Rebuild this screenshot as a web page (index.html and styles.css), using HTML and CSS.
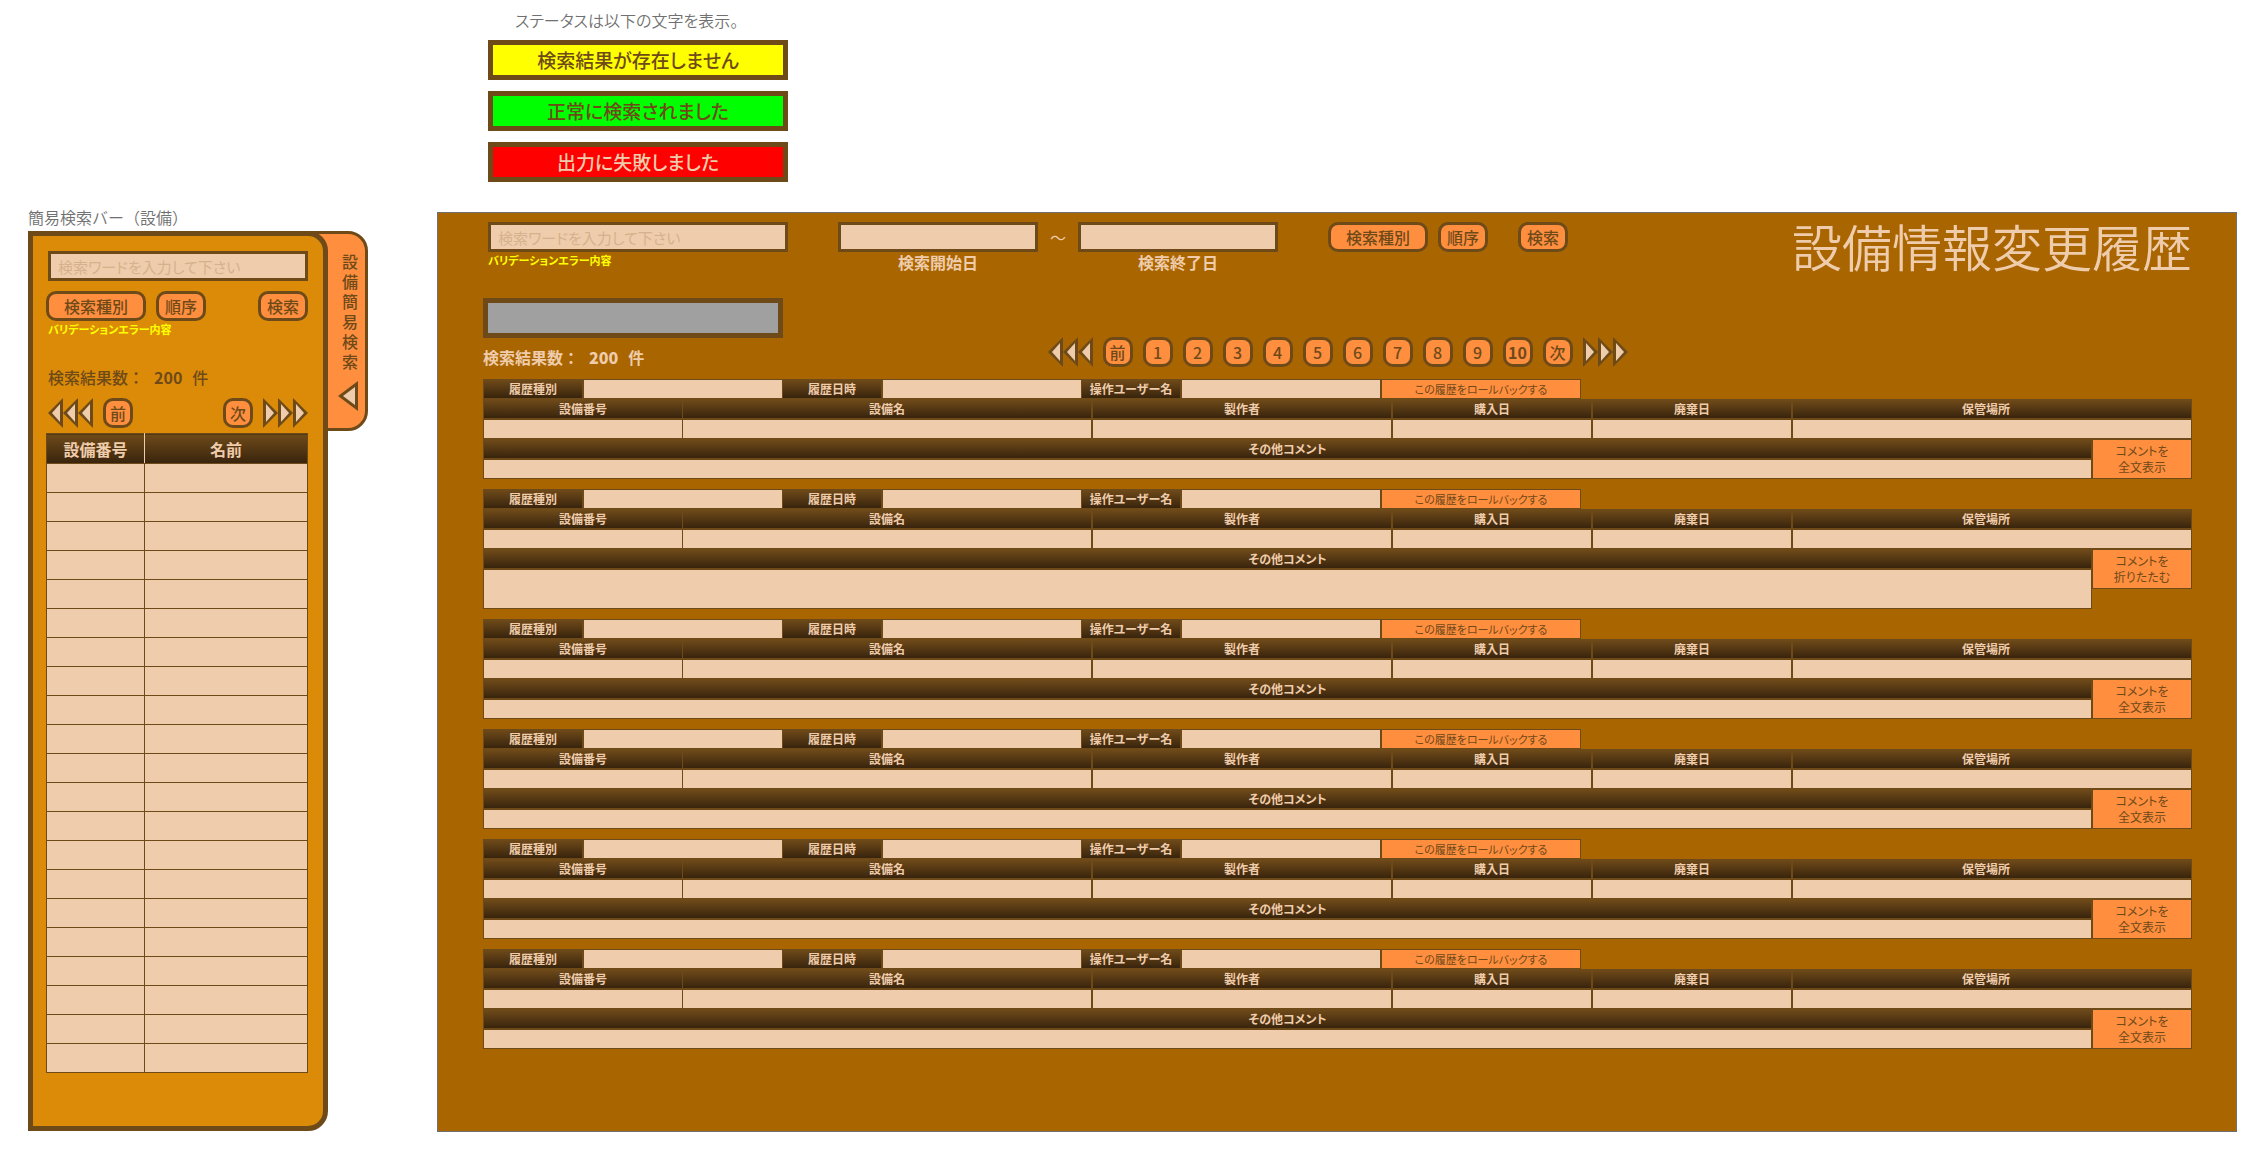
FILE: index.html
```html
<!DOCTYPE html>
<html lang="ja">
<head>
<meta charset="utf-8">
<meta name="viewport" content="width=device-width, initial-scale=1">
<title>設備情報変更履歴</title>
<link rel="stylesheet" href="styles.css">
</head>
<body>
<svg class="defs" aria-hidden="true">
  <symbol id="tri-left" viewBox="0 0 15 30"><path d="M0 15 15 0V30Z" fill="#6f4a19"/><path d="M4 15 12 6V24Z" fill="#efccab"/></symbol>
  <symbol id="tri-right" viewBox="0 0 15 30"><path d="M15 15 0 0V30Z" fill="#6f4a19"/><path d="M11 15 3 6V24Z" fill="#efccab"/></symbol>
</svg>
<div class="page">
  <aside class="side">
    <h2 class="caption">簡易検索バー（設備）</h2>
    <div class="side-wrap">
      <div class="side-panel">
        <form class="side-form">
          <input class="field" type="text" aria-label="検索ワード" placeholder="検索ワードを入力して下さい">
          <div class="side-buttons">
            <button class="btn btn-wide" type="button">検索種別</button>
            <button class="btn" type="button">順序</button>
            <button class="btn btn-end" type="button">検索</button>
          </div>
          <p class="error">バリデーションエラー内容</p>
        </form>
        <p class="count"><span>検索結果数：</span><b>200</b><span>件</span></p>
        <nav class="side-pager" aria-label="設備一覧のページ">
          <span class="arrows"><svg><use href="#tri-left"/></svg><svg><use href="#tri-left"/></svg><svg><use href="#tri-left"/></svg></span>
          <button class="btn btn-page" type="button">前</button>
          <button class="btn btn-page btn-end" type="button">次</button>
          <span class="arrows"><svg><use href="#tri-right"/></svg><svg><use href="#tri-right"/></svg><svg><use href="#tri-right"/></svg></span>
        </nav>
        <table class="list">
          <thead><tr><th class="list-no">設備番号</th><th>名前</th></tr></thead>
          <tbody>
            <tr><td></td><td></td></tr>
            <tr><td></td><td></td></tr>
            <tr><td></td><td></td></tr>
            <tr><td></td><td></td></tr>
            <tr><td></td><td></td></tr>
            <tr><td></td><td></td></tr>
            <tr><td></td><td></td></tr>
            <tr><td></td><td></td></tr>
            <tr><td></td><td></td></tr>
            <tr><td></td><td></td></tr>
            <tr><td></td><td></td></tr>
            <tr><td></td><td></td></tr>
            <tr><td></td><td></td></tr>
            <tr><td></td><td></td></tr>
            <tr><td></td><td></td></tr>
            <tr><td></td><td></td></tr>
            <tr><td></td><td></td></tr>
            <tr><td></td><td></td></tr>
            <tr><td></td><td></td></tr>
            <tr><td></td><td></td></tr>
            <tr><td></td><td></td></tr>
          </tbody>
        </table>
      </div>
      <button class="tab" type="button">
        <span class="tab-text">設備簡易検索</span>
        <svg class="tab-arrow" viewBox="0 0 20 30"><path d="M0 15 20 0V30Z" fill="#6f4a19"/><path d="M5 15 17 6V24Z" fill="#efccab"/></svg>
      </button>
    </div>
  </aside>

  <section class="statuses">
    <p class="note">ステータスは以下の文字を表示。</p>
    <p class="status status-none">検索結果が存在しません</p>
    <p class="status status-ok">正常に検索されました</p>
    <p class="status status-fail">出力に失敗しました</p>
  </section>

  <main class="panel">
    <header class="top">
      <form class="search">
        <div class="word">
          <input class="field" type="text" aria-label="検索ワード" placeholder="検索ワードを入力して下さい">
          <p class="error">バリデーションエラー内容</p>
        </div>
        <div class="date">
          <input class="field" id="date-from" type="text">
          <label for="date-from">検索開始日</label>
        </div>
        <span class="tilde">～</span>
        <div class="date">
          <input class="field" id="date-to" type="text">
          <label for="date-to">検索終了日</label>
        </div>
        <div class="actions">
          <button class="btn btn-wide" type="button">検索種別</button>
          <button class="btn" type="button">順序</button>
          <button class="btn btn-search" type="button">検索</button>
        </div>
      </form>
      <h1 class="title">設備情報変更履歴</h1>
    </header>

    <div class="summary">
      <div>
        <div class="status status-idle" role="status"></div>
        <p class="count count-light"><span>検索結果数：</span><b>200</b><span>件</span></p>
      </div>
      <nav class="pager" aria-label="変更履歴のページ">
        <span class="arrows"><svg><use href="#tri-left"/></svg><svg><use href="#tri-left"/></svg><svg><use href="#tri-left"/></svg></span>
        <button class="btn btn-page" type="button">前</button>
        <button class="btn btn-page" type="button">1</button>
        <button class="btn btn-page" type="button">2</button>
        <button class="btn btn-page" type="button">3</button>
        <button class="btn btn-page" type="button">4</button>
        <button class="btn btn-page" type="button">5</button>
        <button class="btn btn-page" type="button">6</button>
        <button class="btn btn-page" type="button">7</button>
        <button class="btn btn-page" type="button">8</button>
        <button class="btn btn-page" type="button">9</button>
        <button class="btn btn-page btn-current" type="button" aria-current="page">10</button>
        <button class="btn btn-page" type="button">次</button>
        <span class="arrows"><svg><use href="#tri-right"/></svg><svg><use href="#tri-right"/></svg><svg><use href="#tri-right"/></svg></span>
      </nav>
    </div>

    <div class="records">
      <article class="record">
        <div class="meta">
          <table class="grid meta-table"><tr><th>履歴種別</th><td></td><th>履歴日時</th><td></td><th>操作ユーザー名</th><td></td></tr></table>
          <button class="cell-btn rollback" type="button">この履歴をロールバックする</button>
        </div>
        <table class="grid info">
          <tr><th class="w200">設備番号</th><th>設備名</th><th class="w300">製作者</th><th class="w200">購入日</th><th class="w200">廃棄日</th><th class="w400">保管場所</th></tr>
          <tr><td></td><td></td><td></td><td></td><td></td><td></td></tr>
        </table>
        <div class="comment">
          <table class="grid"><tr><th>その他コメント</th></tr><tr><td></td></tr></table>
          <button class="cell-btn toggle" type="button">コメントを<br>全文表示</button>
        </div>
      </article>
      <article class="record record-open">
        <div class="meta">
          <table class="grid meta-table"><tr><th>履歴種別</th><td></td><th>履歴日時</th><td></td><th>操作ユーザー名</th><td></td></tr></table>
          <button class="cell-btn rollback" type="button">この履歴をロールバックする</button>
        </div>
        <table class="grid info">
          <tr><th class="w200">設備番号</th><th>設備名</th><th class="w300">製作者</th><th class="w200">購入日</th><th class="w200">廃棄日</th><th class="w400">保管場所</th></tr>
          <tr><td></td><td></td><td></td><td></td><td></td><td></td></tr>
        </table>
        <div class="comment">
          <table class="grid"><tr><th>その他コメント</th></tr><tr><td></td></tr></table>
          <button class="cell-btn toggle" type="button">コメントを<br>折りたたむ</button>
        </div>
      </article>
      <article class="record">
        <div class="meta">
          <table class="grid meta-table"><tr><th>履歴種別</th><td></td><th>履歴日時</th><td></td><th>操作ユーザー名</th><td></td></tr></table>
          <button class="cell-btn rollback" type="button">この履歴をロールバックする</button>
        </div>
        <table class="grid info">
          <tr><th class="w200">設備番号</th><th>設備名</th><th class="w300">製作者</th><th class="w200">購入日</th><th class="w200">廃棄日</th><th class="w400">保管場所</th></tr>
          <tr><td></td><td></td><td></td><td></td><td></td><td></td></tr>
        </table>
        <div class="comment">
          <table class="grid"><tr><th>その他コメント</th></tr><tr><td></td></tr></table>
          <button class="cell-btn toggle" type="button">コメントを<br>全文表示</button>
        </div>
      </article>
      <article class="record">
        <div class="meta">
          <table class="grid meta-table"><tr><th>履歴種別</th><td></td><th>履歴日時</th><td></td><th>操作ユーザー名</th><td></td></tr></table>
          <button class="cell-btn rollback" type="button">この履歴をロールバックする</button>
        </div>
        <table class="grid info">
          <tr><th class="w200">設備番号</th><th>設備名</th><th class="w300">製作者</th><th class="w200">購入日</th><th class="w200">廃棄日</th><th class="w400">保管場所</th></tr>
          <tr><td></td><td></td><td></td><td></td><td></td><td></td></tr>
        </table>
        <div class="comment">
          <table class="grid"><tr><th>その他コメント</th></tr><tr><td></td></tr></table>
          <button class="cell-btn toggle" type="button">コメントを<br>全文表示</button>
        </div>
      </article>
      <article class="record">
        <div class="meta">
          <table class="grid meta-table"><tr><th>履歴種別</th><td></td><th>履歴日時</th><td></td><th>操作ユーザー名</th><td></td></tr></table>
          <button class="cell-btn rollback" type="button">この履歴をロールバックする</button>
        </div>
        <table class="grid info">
          <tr><th class="w200">設備番号</th><th>設備名</th><th class="w300">製作者</th><th class="w200">購入日</th><th class="w200">廃棄日</th><th class="w400">保管場所</th></tr>
          <tr><td></td><td></td><td></td><td></td><td></td><td></td></tr>
        </table>
        <div class="comment">
          <table class="grid"><tr><th>その他コメント</th></tr><tr><td></td></tr></table>
          <button class="cell-btn toggle" type="button">コメントを<br>全文表示</button>
        </div>
      </article>
      <article class="record">
        <div class="meta">
          <table class="grid meta-table"><tr><th>履歴種別</th><td></td><th>履歴日時</th><td></td><th>操作ユーザー名</th><td></td></tr></table>
          <button class="cell-btn rollback" type="button">この履歴をロールバックする</button>
        </div>
        <table class="grid info">
          <tr><th class="w200">設備番号</th><th>設備名</th><th class="w300">製作者</th><th class="w200">購入日</th><th class="w200">廃棄日</th><th class="w400">保管場所</th></tr>
          <tr><td></td><td></td><td></td><td></td><td></td><td></td></tr>
        </table>
        <div class="comment">
          <table class="grid"><tr><th>その他コメント</th></tr><tr><td></td></tr></table>
          <button class="cell-btn toggle" type="button">コメントを<br>全文表示</button>
        </div>
      </article>
    </div>
  </main>
</div>
</body>
</html>
```
FILE: styles.css
```css
:root {
  --line: #6f4a19;
  --dark: #38240d;
  --cream: #efccab;
  --orange: #ff8e3e;
}

* { box-sizing: border-box; }

body {
  margin: 0;
  background: #fff;
  color: var(--line);
  font-family: "Noto Sans CJK JP", "Noto Sans", sans-serif;
  font-size: 16px;
  line-height: 20px;
  font-feature-settings: "palt";
}

p, h1, h2 { margin: 0; font-weight: 400; }

button, input {
  font: inherit;
  font-feature-settings: inherit;
  color: inherit;
  margin: 0;
}

button { cursor: pointer; }

.defs { display: none; }

.page {
  display: grid;
  grid-template-columns: 340px minmax(0, 1fr);
  grid-template-rows: auto 1fr;
  column-gap: 69px;
  padding: 0 28px;
}

/* Shared controls */
.field {
  display: block;
  width: 100%;
  height: 30px;
  padding: 0 7px;
  border: 3px solid var(--line);
  background: var(--cream);
  font-size: 15px;
}

.field::placeholder { color: #d5b28d; opacity: 1; }

.btn {
  flex: none;
  width: 50px;
  height: 30px;
  padding: 0;
  border: 3px solid var(--line);
  border-radius: 10px;
  background: var(--orange);
  font-weight: 500;
}

.btn-wide { width: 100px; }
.btn-page { width: 30px; }
.btn-end { margin-left: auto; }
.btn-search { margin-left: 20px; }
.btn-current { font-weight: 700; }

.error {
  color: #ff0;
  font-size: 11px;
  font-weight: 700;
  line-height: 16px;
}

.count { display: flex; gap: 10px; font-weight: 500; font-feature-settings: normal; }
.count-light { margin-top: 9px; margin-bottom: 2px; color: var(--cream); font-weight: 700; }

.arrows { display: flex; }
.arrows svg { width: 15px; height: 30px; }

.status {
  width: 300px;
  height: 40px;
  border: 5px solid var(--line);
  font-size: 19px;
  font-weight: 500;
  line-height: 30px;
  text-align: center;
}

.status-none { background: #ff0; }
.status-ok { background: #0f0; }
.status-fail { background: #f00; color: var(--cream); }
.status-idle { background: #a0a0a0; }

/* Sidebar */
.side { grid-row: 1 / 3; padding-top: 207px; }
.caption {
  margin-bottom: 4px;
  color: #707070;
  font-size: 16px;
  font-weight: 350;
  font-feature-settings: normal;
}
.side-wrap { display: flex; align-items: flex-start; }

.side-panel {
  position: relative;
  z-index: 1;
  flex: none;
  width: 300px;
  padding: 15px 15px 53px 13px;
  border: 5px solid var(--line);
  border-radius: 0 20px 20px 0;
  background: #db8b08;
}

.side-form .field { width: 260px; margin-left: 2px; }
.side-form .error { margin-left: 2px; }
.side-buttons { display: flex; gap: 10px; margin-top: 10px; }
.side-panel .count { margin: 30px 0 11px 2px; }

.side-pager {
  display: flex;
  gap: 10px;
  margin: 0 0 5px 2px;
}

.list {
  width: 100%;
  table-layout: fixed;
  border-collapse: collapse;
}

.list th {
  height: 30px;
  padding: 0;
  border: 1px solid var(--line);
  background: linear-gradient(var(--line), var(--dark));
  color: var(--cream);
}

.list .list-no { width: 98px; border-right-color: var(--cream); }
.list td { height: 29px; padding: 0; border: 1px solid var(--line); background: var(--cream); }

.tab {
  display: flex;
  flex-direction: column;
  align-items: flex-end;
  gap: 10px;
  width: 60px;
  height: 200px;
  margin-left: -20px;
  padding: 17px 7px 0 0;
  border: 3px solid var(--line);
  border-radius: 0 20px 20px 0;
  background: var(--orange);
  font-weight: 500;
}

.tab-text { width: 16px; word-break: break-all; }
.tab-arrow { width: 20px; height: 30px; }

/* Status samples */
.statuses {
  display: grid;
  gap: 11px;
  padding: 10px 51px 30px;
}

.note { margin-bottom: -1px; padding-left: 27px; color: #707070; font-weight: 350; }

/* History panel */
.panel {
  padding: 9px 44px 82px 45px;
  border: 1px solid #707070;
  background: #a96500;
}

.top {
  display: flex;
  justify-content: space-between;
  height: 76px;
}

.search { display: flex; align-items: flex-start; padding-left: 5px; }
.word { width: 300px; margin-right: 50px; }
.date { width: 200px; text-align: center; color: var(--cream); font-weight: 700; }
.date .field { color: var(--line); }
.date label { display: block; }
.tilde { width: 40px; line-height: 30px; text-align: center; color: var(--cream); }
.actions { display: flex; gap: 10px; margin-left: 50px; }

.title {
  color: var(--cream);
  font-size: 50px;
  font-weight: 350;
  line-height: 46px;
  white-space: nowrap;
}

.summary {
  display: grid;
  grid-template-columns: 1fr auto 1fr;
  align-items: end;
  margin-bottom: 10px;
}

.pager { display: flex; gap: 10px; padding-bottom: 2px; }

/* History records */
.records { display: grid; gap: 10px; }

.grid {
  width: 100%;
  table-layout: fixed;
  border-spacing: 0;
  font-size: 12px;
  line-height: 18px;
}

.grid th, .grid td { height: 20px; padding: 0; border: 1px solid var(--line); }
.grid th { background: linear-gradient(var(--line), var(--dark)); color: var(--cream); }
.grid td { background: var(--cream); }
.record-open .comment td { height: 40px; }

.meta, .comment { display: flex; align-items: flex-start; }

.meta-table { width: 898px; }
.meta-table th { width: 99px; border-left: 0; }
.meta-table th:first-child { width: 100px; border-left: 1px solid var(--line); }

.info th:nth-child(2), .info td:nth-child(2) { border-left: 0; }
.w200 { width: 200px; }
.w300 { width: 300px; }
.w400 { width: 400px; }
.grid .w400 { padding-right: 12px; }

.cell-btn {
  flex: none;
  padding: 0;
  border: 1px solid var(--line);
  background: var(--orange);
  font-size: 12px;
}

.rollback { width: 200px; height: 20px; font-size: 11px; line-height: 18px; }
.toggle { width: 100px; height: 40px; line-height: 16px; }
```
